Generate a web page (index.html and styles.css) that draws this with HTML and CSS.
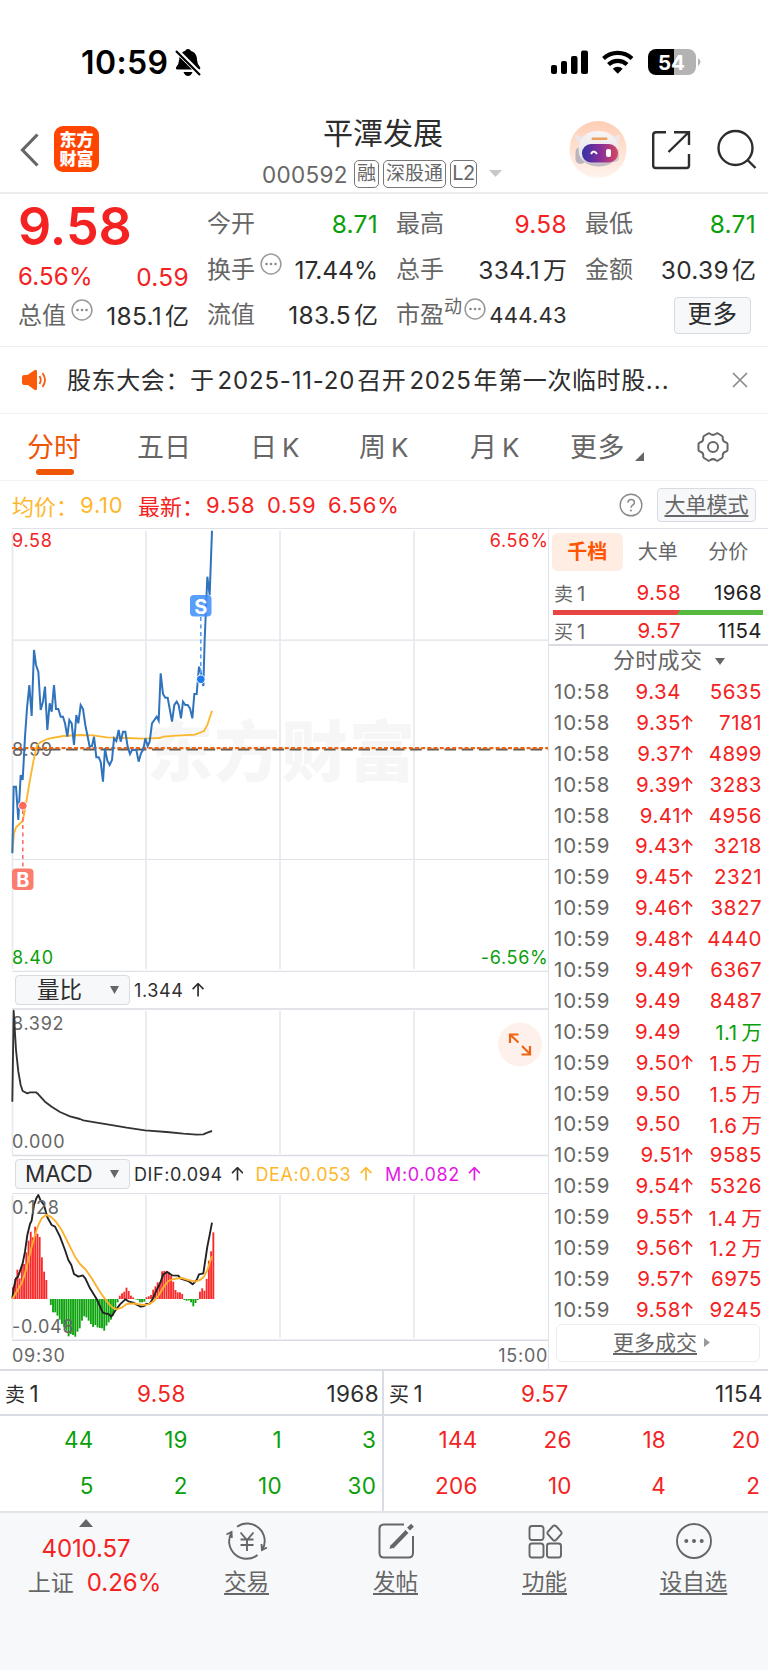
FILE: index.html
```
<!DOCTYPE html>
<html lang="zh-CN">
<head>
<meta charset="utf-8">
<title>平潭发展 000592</title>
<link rel="stylesheet" href="styles.css">
</head>
<body>
<div class="app">

  <div class="status">
    <span class="clock">10:59</span>
    <svg class="bell" width="26" height="28" viewBox="0 0 26 28">
      <path d="M3 20.500q-2.500 0-2-2q3-3.500 3.300-8.500C4.800 5 7.500 2.500 10 2q.8-2 3-2t3 2c4 1 6 4.500 6 9q.2 4 3.200 7.500q.6 2-2 2zM8.500 23h9q-1.500 4-4.500 4t-4.500-4z"/>
      <path d="M0 0 26 26" stroke="#fff" stroke-width="5"/>
      <path d="M1 2 25 26" stroke="#000" stroke-width="2.200"/>
    </svg>
    <svg class="signals" width="155" height="28" viewBox="549 48 155 28">
      <rect x="551" y="65" width="6" height="9" rx="2"/><rect x="561" y="61" width="6" height="13" rx="2"/><rect x="571" y="56" width="6.500" height="18" rx="2"/><rect x="581" y="50.500" width="7" height="23.500" rx="2"/>
      <g fill="none" stroke="#000" stroke-width="4.200"><path d="M603.500 58.500a21 21 0 0 1 28.500 0"/><path d="M608.500 64.500a13.500 13.500 0 0 1 18.500 0"/></g>
      <path d="M612.800 68.800a7.200 7.200 0 0 1 9.900 0l-4.950 5z"/>
      <path d="M656 49h18v26h-18a8 8 0 0 1-8-8v-10a8 8 0 0 1 8-8z"/>
      <path fill="#b3b3b3" d="M674 49h14a8 8 0 0 1 8 8v10a8 8 0 0 1-8 8h-14zM698 58q5 4 0 8z"/>
      <text x="671.500" y="69.500" text-anchor="middle" class="battery">54</text>
    </svg>
  </div>

  <header class="header">
    <svg class="back" width="19" height="34" viewBox="0 0 19 34"><path d="M17.500 1.500 2.500 17l15 15.500" fill="none" stroke="#666" stroke-width="3.200"/></svg>
    <div class="logo">东方<br>财富</div>
    <div class="title">
      <div class="name">平潭发展</div>
      <div class="code"><span class="num">000592</span><span class="tag">融</span><span class="tag t3">深股通</span><span class="tag l2">L2</span><svg width="13" height="8"><path d="M0 0h13l-6.500 7z" fill="#c8c8c8"/></svg></div>
    </div>
    <svg class="tools" width="190" height="58" viewBox="568 121 190 58">
      <defs>
        <linearGradient id="halo" x1="0" y1="0" x2="0" y2="1"><stop offset="0" stop-color="#ffcdb5"/><stop offset="1" stop-color="#fff4ee"/></linearGradient>
        <linearGradient id="visor"><stop offset="0" stop-color="#3330a8"/><stop offset=".55" stop-color="#8e2f96"/><stop offset="1" stop-color="#d8485e"/></linearGradient>
        <linearGradient id="shell" x1="0" y1="0" x2="0" y2="1"><stop offset="0" stop-color="#f8f5f5"/><stop offset=".7" stop-color="#e6e4e9"/><stop offset="1" stop-color="#c0b4bc"/></linearGradient>
      </defs>
      <circle cx="598" cy="149.500" r="28.500" fill="url(#halo)"/>
      <path d="M575 134q0 9 7 11l6-9q-8 2-13-2zM620 134q1 9-6 11l-7-9q8 2 13-2z" fill="#efe6e5"/>
      <rect x="575.500" y="147" width="10" height="17" rx="5" fill="#b9b4bd"/><rect x="610" y="147" width="9" height="15" rx="4.500" fill="#cfc8cc"/>
      <path d="M578.500 149q2-18 19.500-18t20.500 17q0 18-20 18.500-20-1-20-17.500z" fill="url(#shell)"/>
      <rect x="591.500" y="137.500" width="16" height="2.500" rx="1.200" fill="#e9a15c"/>
      <rect x="582" y="144" width="36" height="18.500" rx="9" fill="url(#visor)"/>
      <path d="M591 154q2.500-5 6 0" fill="none" stroke="#fff" stroke-width="2"/><rect x="606" y="149" width="5" height="8" rx="2" fill="#fff"/>
      <g fill="none" stroke="#2d2d2d" stroke-width="2.400">
        <path d="M666 132.200h-10q-2.800 0-2.800 2.800v30.500q0 2.500 2.500 2.500h30.800q2.500 0 2.500-2.500V154M674 132.200h15V145M668.500 152l20-19.500"/>
        <circle cx="735.500" cy="148" r="17"/><path d="m747.500 160 8 8"/>
      </g>
    </svg>
  </header>

  <section class="quote">
    <div class="col lead">
      <div class="price">9.58</div>
      <div class="pair up"><span>6.56%</span><span>0.59</span></div>
      <div class="pair"><span class="lbl">总值<svg class="dots" viewBox="0 0 22 22"><use href="#more"/></svg></span><span>185.1<i>亿</i></span></div>
    </div>
    <div class="col">
      <div class="pair"><span class="lbl">今开</span><span class="down">8.71</span></div>
      <div class="pair"><span class="lbl">换手<svg class="dots" viewBox="0 0 22 22"><use href="#more"/></svg></span><span class="pct">17.44%</span></div>
      <div class="pair"><span class="lbl">流值</span><span>183.5<i>亿</i></span></div>
    </div>
    <div class="col">
      <div class="pair"><span class="lbl">最高</span><span class="up">9.58</span></div>
      <div class="pair"><span class="lbl">总手</span><span>334.1<i>万</i></span></div>
      <div class="pair"><span class="lbl">市盈<sup>动</sup><svg class="dots d2" viewBox="0 0 22 22"><use href="#more"/></svg></span><span class="small">444.43</span></div>
    </div>
    <div class="col">
      <div class="pair"><span class="lbl">最低</span><span class="down">8.71</span></div>
      <div class="pair"><span class="lbl">金额</span><span>30.39<i>亿</i></span></div>
      <div class="pair end"><span class="more">更多</span></div>
    </div>
    <svg class="defs" width="0" height="0"><g id="more"><circle cx="11" cy="11" r="9.900" fill="none" stroke="#999" stroke-width="1.500"/><g fill="#8a8a8a"><circle cx="6.500" cy="11" r="1.300"/><circle cx="11" cy="11" r="1.300"/><circle cx="15.500" cy="11" r="1.300"/></g></g></svg>
  </section>

  <section class="notice">
    <svg width="26" height="22" viewBox="0 0 26 22"><path d="M0 8q0-2 2-2h3.500L12 1.500q3-2 3 1v17q0 3-3 1L6 16H2q-2 0-2-2z" fill="#fb5a0a"/><path d="M17.500 7q2.500 4 0 8M20.500 4q5 7 0 14" fill="none" stroke="#fb5a0a" stroke-width="1.800"/></svg>
    <span class="text">股东大会：于<em>2025-11-20</em>召开<em>2025</em>年第一次临时股<em class="el">...</em></span>
    <svg width="16" height="16" viewBox="0 0 16 16"><path d="m1 1 14 14M15 1 1 15" stroke="#888" stroke-width="1.600"/></svg>
  </section>

  <nav class="tabs">
    <span class="on">分时</span><span class="w5">五日</span><span class="wd">日<em>K</em></span><span class="ww">周<em>K</em></span><span class="wm">月<em>K</em></span><span class="wx">更多</span>
    <svg class="corner" width="9" height="9"><path d="M9 0v9H0z" fill="#666"/></svg>
    <svg width="32" height="30" viewBox="-16 -15 32 30" fill="none" stroke="#666" stroke-width="2"><path d="M-5-13.300Q-4-14-3-13.300Q0-11 3-13.300Q4-14 5-13.500L9-11Q10-10 9.800-9Q9.300-5.500 13-4.500Q14.500-4 14.500-3V3Q14.500 4 13 4.500Q9.300 5.500 9.800 9Q10 10 9 11L5 13.500Q4 14 3 13.300Q0 11-3 13.300Q-4 14-5 13.500L-9 11Q-10 10-9.800 9Q-9.300 5.500-13 4.500Q-14.500 4-14.500 3V-3Q-14.500-4-13-4.500Q-9.300-5.500-9.800-9Q-10-10-9-11z"/><circle r="5"/></svg>
  </nav>

  <section class="latest">
    <span class="avg">均价：</span><span class="avg n">9.10</span>
    <span class="up l2nd">最新：</span><span class="up n">9.58</span><span class="up n">0.59</span><span class="up n">6.56%</span>
    <svg width="24" height="24" viewBox="0 0 24 24"><circle cx="12" cy="12" r="10.800" fill="none" stroke="#888" stroke-width="1.400"/><path d="M9 9.800q0-3.300 3.200-3.300t3.200 3q0 1.500-1.700 2.600T12 14.700" fill="none" stroke="#888" stroke-width="1.500"/><circle cx="12" cy="17.500" r="1" fill="#888"/></svg>
    <span class="mode">大单模式</span>
  </section>

  <main class="main">
    <div class="charts">
      <svg class="c-price" width="536" height="443" viewBox="12 528 536 443">
        <text class="mark" x="147" y="776">东方财富</text>
        <g class="grid">
          <path class="thin" d="M12 528.500H548M12 640.200H548M12 859.500H548M12 971.300H548"/>
          <path d="M12.500 531V969M146 531V969M280 531V969M414 531V969"/>
        </g>
        <text class="axis" x="12" y="756">8.99</text>
        <path d="M12 749.600H548" stroke="#595959" stroke-width="2" stroke-dasharray="11.500 5.700" stroke-dashoffset="-2.500"/>
        <path d="M12 748.100H548" stroke="#f0630f" stroke-width="2.200" stroke-dasharray="4 2.200"/>
        <g transform="translate(0 640) scale(.33333)" fill="none" stroke-linejoin="miter">
          <path stroke="#fdb72c" stroke-width="5.600" d="M37 635 42 580 48 562 68 543 75 510 88 430 100 365 110 320Q116 308 125 305Q137 298 150 295L190 288 240 285 280 286 320 292 380 294 430 296 480 294 490 290 530 287 585 284 612 273 622 255 636 212"/>
          <path stroke="#2f73bd" stroke-width="6" d="M37 640 41 440 48 440 55 540 62 405 68 420 75 290 81 205 88 135 95 228 102 30 108 75 115 95 122 210 129 185 135 140 142 270 149 190 155 215 162 135 168 207 175 207 182 230 189 230 195 250 202 290 208 240 215 250 222 315 229 225 235 250 242 195 249 207 256 255 269 320 276 318 282 290 289 352 296 352 302 365 309 425 315 325 322 362 329 375 336 360 342 295 349 303 356 270 362 305 369 275 376 275 383 320 390 342 396 330 409 330 416 365 423 340 430 328 436 295 443 318 449 305 456 250 470 230 476 242 482 100 489 162 496 173 503 173 516 245 523 195 530 185 536 195 543 235 549 185 556 195 563 195 570 205 577 235 583 162 590 162 597 80 603 100 610 138 614 0 622-190 629-135 636-328"/>
        </g>
        <path d="M200.800 617V676" stroke="#5b9ef8" stroke-width="1.600" stroke-dasharray="4 3.500"/>
        <circle cx="200.800" cy="679.300" r="4.300" fill="#2079ee" stroke="#fff"/>
        <rect x="190" y="595" width="21.500" height="21.500" rx="4" fill="#3d8dfa" fill-opacity=".85"/>
        <text class="flag" x="200.800" y="613.500">S</text>
        <path d="M22.800 810V868" stroke="#fc7163" stroke-width="1.600" stroke-dasharray="4 3.500"/>
        <circle cx="22.800" cy="805.700" r="4.300" fill="#fc6b5c" stroke="#fff"/>
        <rect x="12" y="868.500" width="21.500" height="21.500" rx="4" fill="#fc7c6d"/>
        <text class="flag" x="22.800" y="887">B</text>
        <text class="axis r" x="12" y="547">9.58</text><text class="axis r e" x="548.500" y="547">6.56%</text>
        <text class="axis g" x="12" y="964">8.40</text><text class="axis g e" x="548.500" y="964">-6.56%</text>
      </svg>
      <div class="ind"><span class="sel"><span class="cjk">量比</span><svg width="9" height="8"><path d="M0 0h9L4.500 8z" fill="#666"/></svg></span><span>1.344 <u class="arr"></u></span></div>
      <svg class="c-ratio" width="536" height="146" viewBox="12 1009 536 146">
        <g class="grid"><path class="strong" d="M12 1009H548M12 1155.500H548"/><path d="M12.500 1011V1154M146 1011V1154M280 1011V1154M414 1011V1154"/></g>
        <text class="axis" x="12" y="1029.500">8.392</text><text class="axis" x="12" y="1148">0.000</text>
        <path transform="translate(0 940) scale(.33333)" fill="none" stroke="#333" stroke-width="5.600" stroke-linejoin="round" d="M37 485 41 212 48 330 55 395 62 435 68 453 82 460 90 457 108 457 115 463 135 485 155 500 180 516 210 529 240 537 250 541 290 548 340 556 380 563 435 571 500 576 550 581 590 584 610 583 622 578 636 573"/>
        <circle cx="520" cy="1044.500" r="22" fill="#fef1eb"/>
        <path d="M510 1043V1034.500H518.500M510.500 1035 518.500 1042.500M530 1046V1054.500H521.500M530 1054 522 1046" fill="none" stroke="#ee6412" stroke-width="2.200"/>
      </svg>
      <div class="ind"><span class="sel"><span>MACD</span><svg width="9" height="8"><path d="M0 0h9L4.500 8z" fill="#666"/></svg></span><span>DIF:0.094 <u class="arr"></u></span><span class="dea">DEA:0.053 <u class="arr"></u></span><span class="m">M:0.082 <u class="arr"></u></span></div>
      <svg class="c-macd" width="536" height="147" viewBox="12 1193 536 147">
        <g class="grid"><path class="thin" d="M12 1193.500H548"/><path class="thin2" d="M12 1340.200H548"/><path d="M12.500 1195V1338M146 1195V1338M280 1195V1338M414 1195V1338"/></g>
        <g transform="translate(0 940) scale(.33333)" fill="none" stroke-linejoin="round">
          <g id="bars"></g>
          <path stroke="#222" stroke-width="5.600" d="M37 1075 41 1045 48 1015 54 1010 68 970 75 935 82 885 90 852 95 842 102 795 109 775 115 765 122 782 132 795 142 832 155 855 165 860 180 890 195 930 205 960 214 975 222 1002 235 1010 248 1006 256 1015 270 1045 290 1077 308 1117 315 1120 325 1122 334 1130 345 1113 360 1093 376 1078 385 1084 400 1088 412 1095 422 1100 432 1098 438 1092 448 1092 458 1077 470 1050 480 1030 490 1003 502 996 516 1006 535 1007 542 1016 565 1023 578 1033 590 1020 597 1003 610 1000 616 960 622 920 628 890 636 848"/>
          <path stroke="#fdb02c" stroke-width="5.600" d="M37 1077 50 1055 65 1030 75 1000 85 960 95 920 105 885 115 855 125 835 138 825 152 830 168 845 185 870 205 910 225 950 240 972 258 990 275 1015 295 1048 310 1070 325 1090 338 1103 350 1108 365 1103 380 1092 400 1090 430 1095 445 1093 460 1085 475 1068 490 1042 505 1023 520 1017 545 1014 565 1020 585 1025 600 1020 612 1010 622 990 636 948"/>
        </g>
        <text class="axis" x="12" y="1214">0.128</text><text class="axis" x="12" y="1332.500">-0.048</text>
      </svg>
      <div class="times"><span>09:30</span><span>15:00</span></div>
    </div>

    <aside class="book">
      <div class="btabs"><span class="on">千档</span><span>大单</span><span>分价</span></div>
      <div class="lvl"><span class="k">卖<em>1</em></span><span class="p">9.58</span><span class="q">1968</span></div>
      <div class="ratio"></div>
      <div class="lvl b"><span class="k">买<em>1</em></span><span class="p">9.57</span><span class="q">1154</span></div>
      <div class="thead">分时成交<svg width="10" height="7"><path d="M0 0h10l-5 7z" fill="#666"/></svg></div>
      <div class="trades" id="trades"></div>
      <div class="allbtn"><span>更多成交</span><svg width="6" height="9"><path d="M0 0v9l6-4.500z" fill="#999"/></svg></div>
    </aside>
  </main>

  <section class="depth">
    <div class="side">
      <div class="dh"><span>卖<em>1</em></span><span class="up">9.58</span><span>1968</span></div>
      <div class="dg down"><span>44</span><span>19</span><span>1</span><span>3</span><span>5</span><span>2</span><span>10</span><span>30</span></div>
    </div>
    <div class="side buy">
      <div class="dh"><span>买<em>1</em></span><span class="up">9.57</span><span>1154</span></div>
      <div class="dg up"><span>144</span><span>26</span><span>18</span><span>20</span><span>206</span><span>10</span><span>4</span><span>2</span></div>
    </div>
  </section>

  <footer class="bar">
    <div class="index">
      <svg width="14" height="8"><path d="M7 0l7 8H0z" fill="#666"/></svg>
      <div class="up i1">4010.57</div>
      <div class="i2">上证<span class="up">0.26%</span></div>
    </div>
    <div class="item"><svg width="42" height="38" viewBox="-21 -19 42 38" fill="none" stroke="#666" stroke-width="1.900"><path d="M-10-14.200A17.500 17.500 0 0 1 15.500 8.500M20 6.500l-5 2.500-.5-6M10.500 14A17.500 17.500 0 0 1-15.500-8.500M-20.500-6.500l5-2.500.3 6M-6.500-8.500 0-1l6.500-7.500M0-1V10M-6.500-1.500h13M-6.500 4h13"/></svg><span>交易</span></div>
    <div class="item"><svg width="42" height="38" viewBox="-21 -19 42 38" fill="none" stroke="#666" stroke-width="2"><path d="M8-16.500h-20q-4.500 0-4.500 4.500v24q0 4.500 4.500 4.500h24.500q4.500 0 4.500-4.500V-5"/><path d="M-4 6 11-9.500" stroke-width="4"/><path d="m-6.500 8 1.200-4.500 3.300 3z" fill="#666" stroke="none"/><path d="m12.500-12 4-3.800" stroke-width="4"/></svg><span>发帖</span></div>
    <div class="item"><svg width="42" height="38" viewBox="-21 -19 42 38" fill="none" stroke="#666" stroke-width="1.900"><rect x="-15.500" y="-15" width="14" height="14" rx="2.500"/><rect x="-15.500" y="2.500" width="14" height="14" rx="2.500"/><rect x="2" y="2.500" width="14" height="14" rx="2.500"/><path d="M8-15q1.500-1.200 3 0l5 5.500q1.200 1.500 0 3l-5 5.500q-1.500 1.200-3 0l-5-5.500q-1.200-1.500 0-3z"/></svg><span>功能</span></div>
    <div class="item"><svg width="42" height="38" viewBox="-21 -19 42 38"><circle r="17" cx="0" cy="0" fill="none" stroke="#666" stroke-width="1.900"/><g fill="#666"><circle cx="-7.700" r="2"/><circle r="2"/><circle cx="7.700" r="2"/></g></svg><span>设自选</span></div>
  </footer>
</div>
<script src="script.js"></script>
</body>
</html>
```
FILE: styles.css
```
* { box-sizing: border-box; }
body { margin: 0; background: #fff; color: #2d2d2d; font-family: Inter, "Noto Sans CJK SC", sans-serif; }
svg { display: block; flex: none; }
em, i { font-style: normal; }
.app { width: 768px; height: 1670px; overflow: hidden; display: flex; flex-direction: column; }
.app > * { flex-shrink: 0; }
.up { color: #f52222; }
.down { color: #0a9f0a; }

.status { height: 100px; padding: 48px 64px 0 81px; display: flex; align-items: flex-start; }
.clock { font-size: 32px; font-weight: 600; line-height: 30px; letter-spacing: .4px; color: #000; width: 94px; white-space: nowrap; }
.bell { margin-top: 1px; }
.signals { margin-left: auto; }
.battery { font: 700 20.500px Inter, sans-serif; fill: #fff; }

.header { height: 94px; border-bottom: 2px solid #ececec; display: flex; align-items: flex-start; padding-left: 20px; }
.back { margin-top: 33px; }
.logo { margin: 26px 0 0 15px; width: 45px; height: 46px; padding-top: 3px; border-radius: 9px; background: #ff4500; color: #fff; text-align: center; font: 900 17px/19px "Noto Sans CJK SC", sans-serif; }
.title { width: 300px; margin-left: 163px; }
.name { font-size: 30px; line-height: 36px; margin-top: 15px; padding-left: 61px; }
.code { display: flex; align-items: center; height: 30px; margin-top: 8px; color: #666; }
.code .num { font-size: 22.500px; width: 92px; letter-spacing: .3px; }
.tag { border: 1.500px solid #777; border-radius: 5px; height: 28px; width: 25px; margin-right: 4px; font-size: 19px; line-height: 25px; text-align: center; }
.t3 { width: 63px; }
.l2 { width: 27px; font-size: 20px; letter-spacing: -.5px; margin-right: 12px; }
.tools { margin: 21px 10px 0 auto; }

.quote { height: 153px; border-bottom: 1px solid #efefef; display: flex; padding: 7px 12px 0 18px; position: relative; }
.col { width: 171px; margin-left: 18px; }
.lead { margin-left: 0; }
.pair { height: 46px; display: flex; justify-content: space-between; align-items: center; font-size: 24px; line-height: 46px; white-space: nowrap; }
.pair > span:last-child { font-size: 24.500px; letter-spacing: .3px; }
.pair > span.pct { letter-spacing: 0; }
.pair i { margin-left: 3px; font-size: 24px; letter-spacing: 0; }
.pair:last-child { margin-top: -1px; }
.lbl { color: #666; display: flex; }
.price { height: 53px; font-size: 52px; line-height: 52px; font-weight: 600; color: #f52222; }
.lead .pair.up { height: 40px; padding-top: 5px; letter-spacing: .2px; }
.dots { width: 22px; height: 22px; margin: 6px 0 0 5px; }
sup { font-size: 18px; line-height: 30px; vertical-align: top; }
.d2 { margin-left: 2px; }
.pair > span.small { font-size: 22px; letter-spacing: .3px; }
.end { justify-content: flex-end; }
.pair > span.more { width: 77px; height: 37px; margin-right: 5px; border: 1px solid #d9dbe2; border-radius: 4px; background: #f7f8fa; color: #2d2d2d; line-height: 33px; text-align: center; letter-spacing: .5px; }
.defs { position: absolute; }

.notice { height: 67px; border-bottom: 1px solid #f2f2f2; display: flex; align-items: center; padding: 0 20px 0 22px; }
.notice .text { margin: -3px 0 0 19px; flex: 1; font-size: 24px; letter-spacing: .6px; white-space: nowrap; }
.notice em { margin: 0 2px 0 3px; letter-spacing: .8px; }
.notice .el { margin: 0; letter-spacing: 1px; }

.tabs { height: 67px; border-bottom: 1px solid #f2f2f2; display: flex; align-items: center; font-size: 27px; color: #666; padding-left: 28px; white-space: nowrap; }
.tabs span { height: 66px; line-height: 67px; }
.tabs em { font-size: 26px; margin-left: 5px; }
.tabs .on { color: #ee5505; width: 109px; margin-left: -1px; margin-right: 1px; position: relative; }
.tabs .on::after { content: ""; position: absolute; left: 9px; bottom: 5px; width: 38px; height: 6px; border-radius: 3px; background: #ee5505; }
.tabs .w5 { width: 113px; }
.tabs .wd { width: 109px; }
.tabs .ww { width: 111px; }
.tabs .wm { width: 100px; }
.tabs .wx { width: 65px; letter-spacing: .5px; }
.tabs .corner { margin: 18px 53px 0 0; }

.latest { height: 47px; display: flex; align-items: center; font-size: 22px; padding: 0 12px; white-space: nowrap; }
.latest .avg { color: #fdb72c; }
.latest .n { width: 61px; letter-spacing: .8px; }
.latest .avg.n { width: 58px; }
.latest > span:first-child, .l2nd { width: 68px; }
.latest svg { margin-left: auto; margin-right: 14px; }
.mode { width: 99px; height: 34px; border: 1px solid #d9dbe2; border-radius: 4px; background: #f7f8fa; color: #666; font-size: 21px; line-height: 31px; text-align: center; text-decoration: underline; text-underline-offset: 3px; text-decoration-thickness: 1.500px; }

.main { height: 841px; display: flex; padding-left: 12px; }
.charts { width: 536px; }
.charts > svg { overflow: visible; }
.grid { fill: none; stroke: #e8eaf1; stroke-width: 1.800; }
.grid .thin { stroke: #e0e2ea; stroke-width: 1.200; }
.grid .thin2, .grid .strong { stroke: #d9dce3; stroke-width: 1.600; }
.axis { font: 18px Inter, sans-serif; fill: #666; letter-spacing: .7px; }
.axis.r { fill: #f52222; }
.axis.g { fill: #0a9f0a; }
.e { text-anchor: end; }
.mark { font: 900 66px "Noto Sans CJK SC", sans-serif; fill: #f6f6f6; letter-spacing: 1.300px; }
.flag { font: 700 20px Inter, sans-serif; fill: #fff; text-anchor: middle; }
.ind { height: 38px; display: flex; align-items: center; font-size: 18px; padding-left: 3px; white-space: nowrap; letter-spacing: .6px; }
.sel { width: 115px; height: 30px; border: 1px solid #d9dbe2; border-radius: 4px; background: #f7f8fa; display: flex; align-items: center; justify-content: space-between; padding: 0 10px 0 9px; font-size: 22.500px; margin-right: 4px; letter-spacing: 0; line-height: 28px; }
.sel .cjk { padding-left: 12px; }
.dea { color: #fdb72c; margin-left: 12px; }
.m { color: #e417e4; margin-left: 13px; }
.arr { display: inline-block; width: 12px; height: 14px; margin-left: 3px; background: currentColor; clip-path: polygon(50% 0, 100% 43%, 90% 52%, 57% 22%, 57% 100%, 43% 100%, 43% 22%, 10% 52%, 0 43%); }
.times { height: 29px; display: flex; justify-content: space-between; align-items: center; padding-top: 2px; font-size: 18px; color: #666; letter-spacing: .7px; }

.book { width: 220px; border-left: 1.500px solid #e0e2ea; border-top: 1px solid #e0e2ea; }
.btabs { height: 47px; padding: 4px 0 0 3px; display: flex; font-size: 20px; line-height: 38px; color: #666; }
.btabs span { width: 70.500px; height: 38px; text-align: center; }
.btabs .on { background: #ffece3; border-radius: 6px; color: #ff5500; font-weight: 600; }
.lvl { height: 33px; display: flex; align-items: center; padding: 0 6px 1px 5px; font-size: 20.500px; letter-spacing: .4px; }
.lvl.b { height: 31px; padding-top: 2px; border-bottom: 2px solid #d9dce3; }
.lvl .k { color: #666; width: 66px; font-size: 19px; letter-spacing: 0; }
.lvl em { font-size: 20.500px; margin-left: 4px; }
.lvl .p { color: #f52222; width: 61px; text-align: right; }
.lvl .q { flex: 1; text-align: right; color: #222; }
.ratio { height: 5px; margin: 1px 5px 0 4px; background: linear-gradient(125deg, #e84545 59.500%, #57b840 59.700%); }
.thead { height: 30px; display: flex; align-items: center; font-size: 22px; line-height: 28px; color: #666; gap: 13px; letter-spacing: .3px; padding: 0 0 2px 64px; }
.thead svg { margin-top: 3px; }
.trade { height: 30.900px; display: flex; align-items: center; padding: 0 6px 0 5px; font-size: 20.500px; letter-spacing: .5px; white-space: nowrap; color: #f52222; }
.trade .t { color: #666; width: 66px; letter-spacing: .8px; }
.trade .p { width: 61px; text-align: right; }
.trade .a { width: 12px; height: 14.500px; visibility: hidden; }
.trade .a.on { visibility: visible; }
.trade .q { flex: 1; text-align: right; }
.trade i { margin-left: 4px; letter-spacing: 0; }
.trade .sold { color: #0a9f0a; }
.allbtn { width: 204px; height: 38px; margin: -1px 0 0 7px; border: 1.500px solid #ededed; border-radius: 6px; display: flex; align-items: center; gap: 7px; padding-left: 56px; font-size: 21px; color: #666; line-height: 34px; }
.allbtn span { text-decoration: underline; text-underline-offset: 3px; text-decoration-thickness: 1.500px; }

.depth { height: 144px; display: flex; border-top: 2px solid #d9dce3; border-bottom: 2px solid #e2e4e8; }
.side { width: 384px; border-right: 2px solid #d9dce3; }
.side.buy { border-right: 0; }
.dh { height: 45px; border-bottom: 2px solid #d9dce3; display: grid; grid-template-columns: 130px 1fr 1fr; align-items: center; padding: 2px 3px 0 5px; font-size: 22.500px; letter-spacing: .4px; }
.buy .dh { padding-right: 5px; }
.dh span:nth-child(2) { padding-left: 2px; }
.dh span:last-child { text-align: right; }
.dh span:first-child { font-size: 20px; }
.dh em { font-size: 22.500px; margin-left: 4px; }
.dg { display: grid; grid-template-columns: repeat(4, 94.200px); grid-auto-rows: 46px; text-align: right; font-size: 22.500px; line-height: 46px; padding-top: 1px; letter-spacing: .3px; margin-left: -.5px; }

.bar { height: 157px; background: #f7f8fa; display: flex; color: #666; font-size: 22.500px; white-space: nowrap; }
.index { width: 172px; display: flex; flex-direction: column; align-items: center; padding-top: 6px; }
.i1 { font-size: 24px; line-height: 30px; margin-top: 7px; letter-spacing: -.1px; }
.i2 { font-size: 23px; line-height: 34px; margin-top: 2px; padding-left: 17px; }
.i2 span { margin-left: 13px; font-size: 24px; }
.item { width: 149px; display: flex; flex-direction: column; align-items: center; padding-top: 9px; }
.item span { line-height: 34px; margin-top: 5px; text-decoration: underline; text-underline-offset: 3px; text-decoration-thickness: 1.500px; }
```
FILE: script.js
```
const macd = [35,60,88,62,100,105,140,175,202,185,217,196,186,125,82,57,0,-18,-40,-40,-50,-62,-75,-85,-95,-112,-105,-108,-113,-98,-88,-65,-52,-55,-65,-75,-84,-78,-85,-87,-88,-95,-80,-70,-62,-50,-28,-10,10,17,22,34,24,10,5,-1,-3,-10,-10,-8,5,8,12,28,38,50,50,83,84,84,80,70,52,27,20,20,15,-3,-5,-4,-10,-22,-12,-3,22,32,25,60,115,143,200];
document.getElementById('bars').innerHTML = macd.map((v, i) =>
  `<rect x="${(36 + i * 6.68).toFixed(1)}" y="${v > 0 ? 1077 - v : 1077}" width="5.6" height="${Math.abs(v)}" fill="${v > 0 ? '#f82a2a' : '#0da30d'}"/>`).join('');

const trades = [
  ['10:58','9.34',0,'5635'],['10:58','9.35',1,'7181'],['10:58','9.37',1,'4899'],['10:58','9.39',1,'3283'],['10:58','9.41',1,'4956'],
  ['10:59','9.43',1,'3218'],['10:59','9.45',1,'2321'],['10:59','9.46',1,'3827'],['10:59','9.48',1,'4440'],['10:59','9.49',1,'6367'],
  ['10:59','9.49',0,'8487'],['10:59','9.49',0,'1.1万',1],['10:59','9.50',1,'1.5万'],['10:59','9.50',0,'1.5万'],['10:59','9.50',0,'1.6万'],
  ['10:59','9.51',1,'9585'],['10:59','9.54',1,'5326'],['10:59','9.55',1,'1.4万'],['10:59','9.56',1,'1.2万'],['10:59','9.57',1,'6975'],['10:59','9.58',1,'9245']];
document.getElementById('trades').innerHTML = trades.map(([t, p, up, q, sold]) =>
  `<div class="trade"><span class="t">${t}</span><span class="p">${p}</span><svg class="a${up ? ' on' : ''}" viewBox="0 0 12 14.5"><path d="M6 14.5V1M.8 6.500 6 1.200l5.200 5.300" fill="none" stroke="#f52222" stroke-width="1.700"/></svg><span class="q${sold ? ' sold' : ''}">${q.replace('万', '<i>万</i>')}</span></div>`).join('');
```
